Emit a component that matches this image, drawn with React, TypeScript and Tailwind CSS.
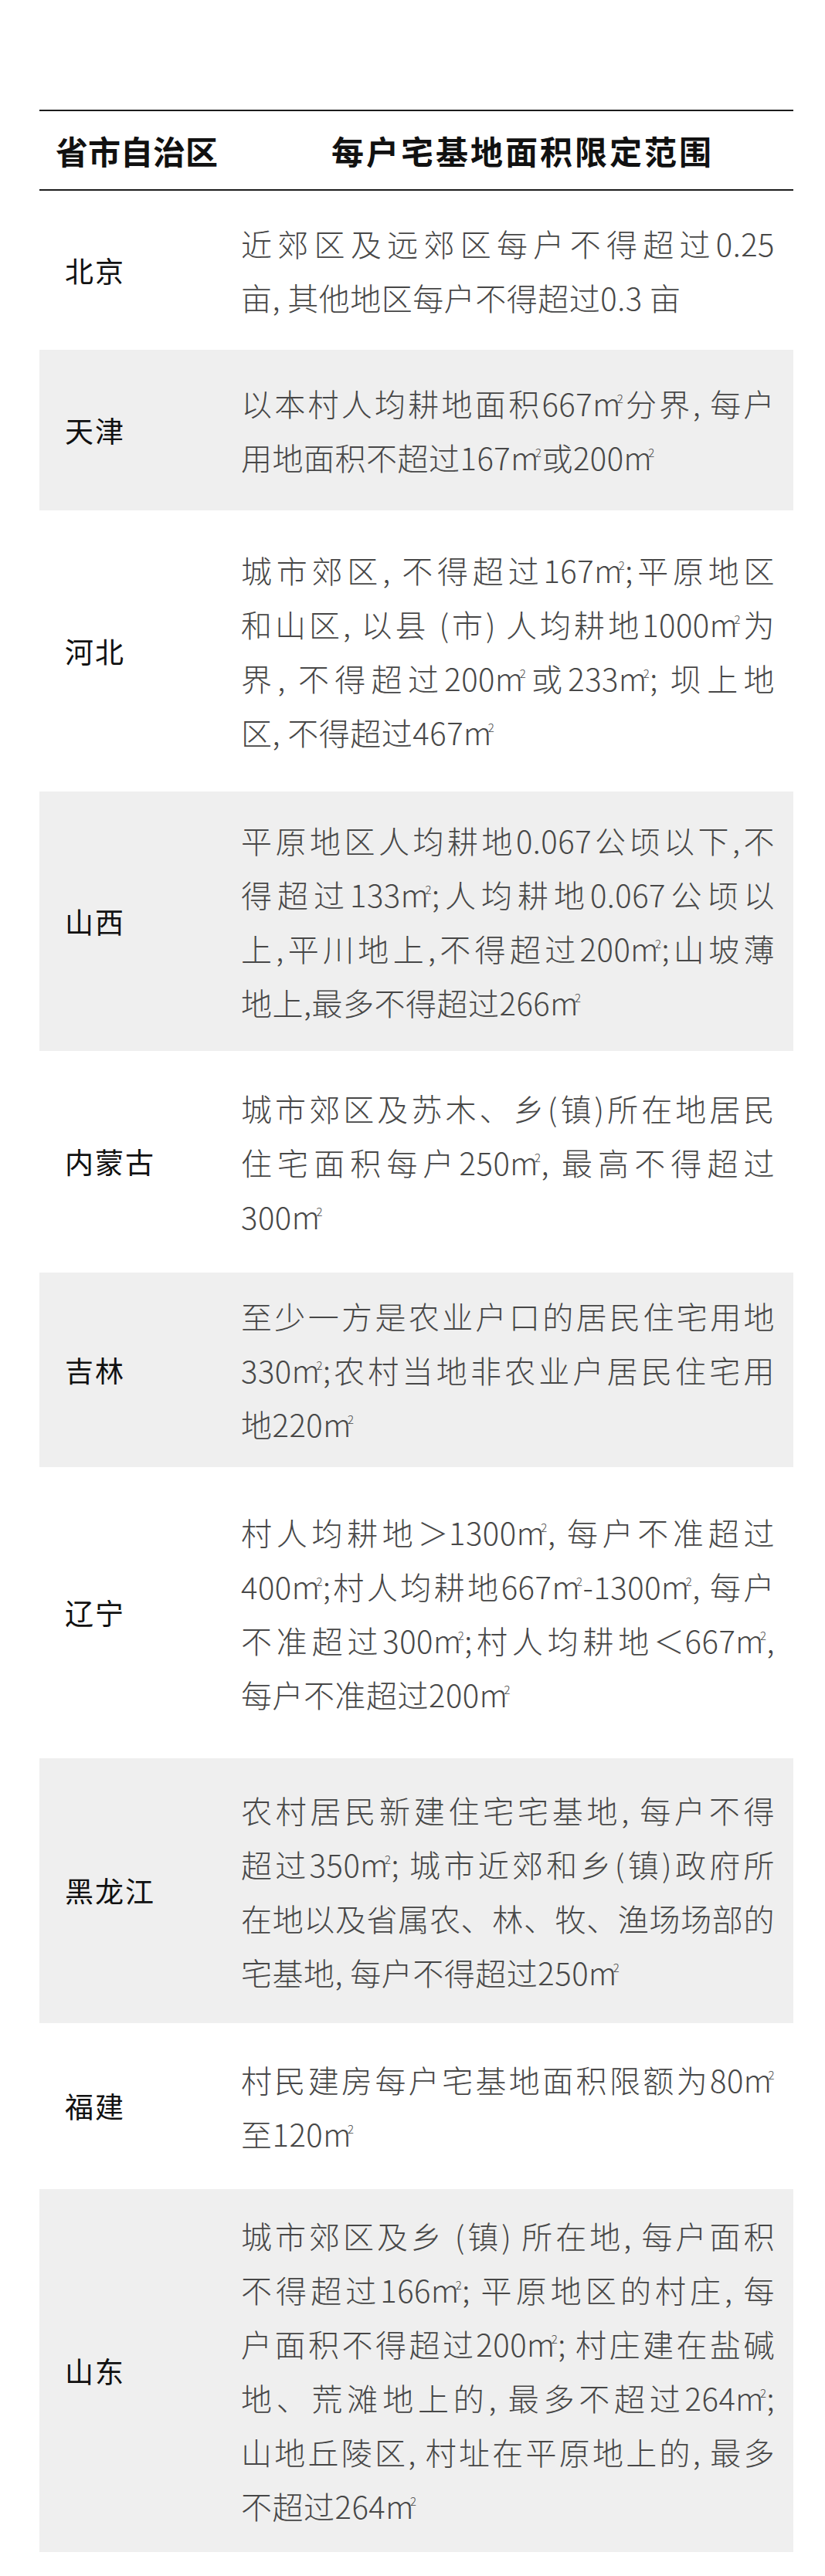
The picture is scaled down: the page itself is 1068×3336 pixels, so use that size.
type Row = {
  name: string;
  rowClass: string;
  lines: string[];
};

const rows: Row[] = [
  {
    name: '北京',
    rowClass: 'h-[206px]',
    lines: ['近郊区及远郊区每户不得超过0.25', '亩, 其他地区每户不得超过0.3 亩'],
  },
  {
    name: '天津',
    rowClass: 'h-[208px] bg-[#efefef]',
    lines: ['以本村人均耕地面积667㎡分界, 每户', '用地面积不超过167㎡或200㎡'],
  },
  {
    name: '河北',
    rowClass: 'h-[364px]',
    lines: [
      '城市郊区, 不得超过167㎡;平原地区',
      '和山区, 以县 (市) 人均耕地1000㎡为',
      '界, 不得超过200㎡或233㎡; 坝上地',
      '区, 不得超过467㎡',
    ],
  },
  {
    name: '山西',
    rowClass: 'h-[336px] bg-[#efefef]',
    lines: [
      '平原地区人均耕地0.067公顷以下,不',
      '得超过133㎡;人均耕地0.067公顷以',
      '上,平川地上,不得超过200㎡;山坡薄',
      '地上,最多不得超过266㎡',
    ],
  },
  {
    name: '内蒙古',
    rowClass: 'h-[287px]',
    lines: ['城市郊区及苏木、乡(镇)所在地居民', '住宅面积每户250㎡, 最高不得超过', '300㎡'],
  },
  {
    name: '吉林',
    rowClass: 'h-[252px] bg-[#efefef]',
    lines: ['至少一方是农业户口的居民住宅用地', '330㎡;农村当地非农业户居民住宅用', '地220㎡'],
  },
  {
    name: '辽宁',
    rowClass: 'h-[377px]',
    lines: [
      '村人均耕地＞1300㎡, 每户不准超过',
      '400㎡;村人均耕地667㎡-1300㎡, 每户',
      '不准超过300㎡;村人均耕地＜667㎡,',
      '每户不准超过200㎡',
    ],
  },
  {
    name: '黑龙江',
    rowClass: 'h-[343px] bg-[#efefef]',
    lines: [
      '农村居民新建住宅宅基地, 每户不得',
      '超过350㎡; 城市近郊和乡(镇)政府所',
      '在地以及省属农、林、牧、渔场场部的',
      '宅基地, 每户不得超过250㎡',
    ],
  },
  {
    name: '福建',
    rowClass: 'h-[215px]',
    lines: ['村民建房每户宅基地面积限额为80㎡', '至120㎡'],
  },
  {
    name: '山东',
    rowClass: 'h-[470px] bg-[#efefef]',
    lines: [
      '城市郊区及乡 (镇) 所在地, 每户面积',
      '不得超过166㎡; 平原地区的村庄, 每',
      '户面积不得超过200㎡; 村庄建在盐碱',
      '地、荒滩地上的, 最多不超过264㎡;',
      '山地丘陵区, 村址在平原地上的, 最多',
      '不超过264㎡',
    ],
  },
];

// ㎡ is drawn as "m" with a small raised 2, as in the source table
function renderLine(text: string) {
  return text.split(/(㎡)/).map((part, i) =>
    part === '㎡' ? (
      <span key={i}>
        m<span className="relative -top-[17px] -ml-[5px] text-[15px] leading-none">2</span>
      </span>
    ) : (
      <span key={i}>{part}</span>
    )
  );
}

export default function App() {
  return (
    <div
      className="min-h-[3336px] bg-white pt-[142px]"
      style={{ fontFamily: '"Noto Sans CJK SC", "Noto Sans", sans-serif' }}
    >
      <div className="ml-[51px] w-[976px]">
        <div className="flex h-[105px] items-center border-y-2 border-[#1c1c1c] text-[#111]">
          <div className="w-[261px] pl-[21px] text-[42px] font-bold leading-none">省市自治区</div>
          <div className="flex-1 pl-[14px] text-center text-[42px] font-bold leading-none tracking-[3px]">
            每户宅基地面积限定范围
          </div>
        </div>

        {rows.map((row) => (
          <div key={row.name} className={`flex items-center ${row.rowClass}`}>
            <div className="w-[261px] pl-[33px] text-[37px] leading-none tracking-[2px] text-[#111]">
              {row.name}
            </div>
            <div className="w-[691px] text-[40px] font-light leading-[70px] tracking-[0.5px] text-[#474747]">
              {row.lines.map((line, i) => (
                <div
                  key={i}
                  className={
                    i === row.lines.length - 1
                      ? 'whitespace-nowrap text-left'
                      : 'text-justify [text-align-last:justify] [text-wrap:nowrap]'
                  }
                >
                  {renderLine(line)}
                </div>
              ))}
            </div>
          </div>
        ))}
      </div>
    </div>
  );
}
